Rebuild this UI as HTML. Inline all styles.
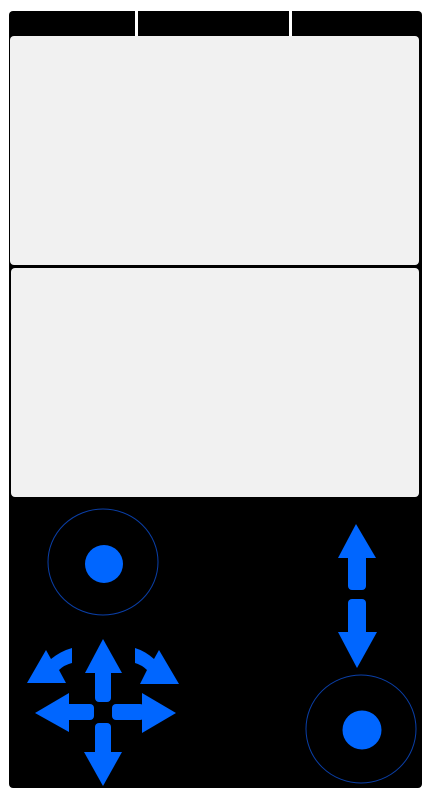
<!DOCTYPE html>
<html><head><style>
html,body{margin:0;padding:0;background:#fff;width:429px;height:792px;overflow:hidden}
</style></head><body>
<svg width="429" height="792" viewBox="0 0 429 792" style="position:absolute;left:0;top:0">
<rect x="9" y="11" width="413" height="777" rx="4" fill="#000"/>
<rect x="135" y="11" width="3" height="25" fill="#fff"/>
<rect x="289" y="11" width="3" height="25" fill="#fff"/>
<rect x="10" y="36" width="409" height="229" rx="4" fill="#f1f1f1"/>
<rect x="11" y="268" width="408" height="229" rx="4" fill="#f1f1f1"/>
<g fill="#0066ff">
<ellipse cx="103" cy="562" rx="55" ry="53" fill="none" stroke="#0a3fa8" stroke-width="1"/>
<circle cx="104" cy="564" r="19"/>
<ellipse cx="361" cy="729" rx="55" ry="54" fill="none" stroke="#0a3fa8" stroke-width="1"/>
<circle cx="362" cy="730" r="19.5"/>
<polygon points="356,524 376,558 338,558"/>
<rect x="348" y="550" width="18" height="40" rx="4"/>
<rect x="348" y="599" width="18" height="40" rx="4"/>
<polygon points="338,632 377,632 357,668"/>
<polygon points="103,639 122,673 85,673"/>
<rect x="95" y="665" width="16" height="37" rx="4"/>
<rect x="95" y="723" width="16" height="35" rx="4"/>
<polygon points="84,752 122,752 103,786"/>
<polygon points="35,713 69,693 69,732"/>
<rect x="62" y="704" width="32" height="16" rx="4"/>
<rect x="112" y="704" width="32" height="16" rx="4"/>
<polygon points="142,693 176,713 142,733"/>
<path d="M27,683 L46,650 L51,659 Q61,651 72,648 L72,663 Q64,665 59,670 L66,683 Z"/>
<path d="M179,684 L159,650 L154,659 Q145,651 135,648 L135,663 Q142,665 147,670 L140,684 Z"/>
</g>
</svg>
</body></html>
